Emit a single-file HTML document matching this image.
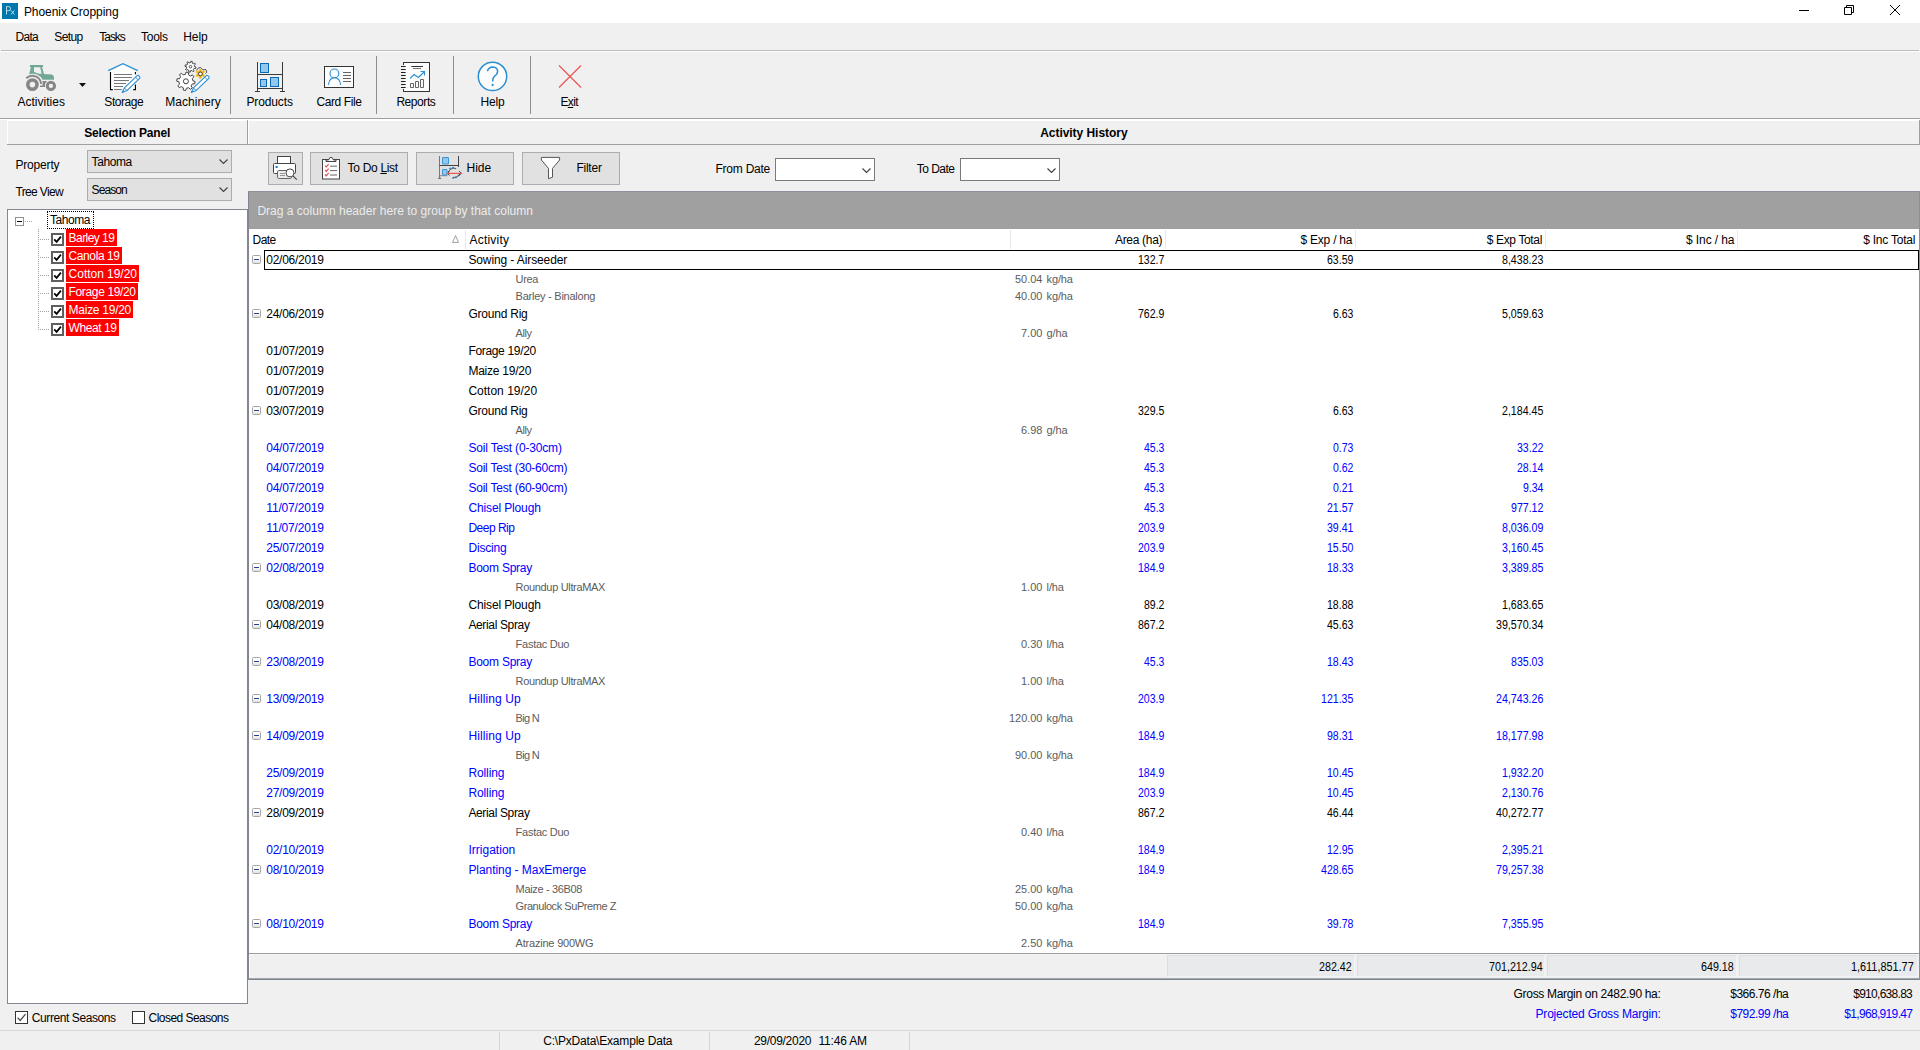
<!DOCTYPE html>
<html><head><meta charset="utf-8"><title>Phoenix Cropping</title>
<style>
html,body{margin:0;padding:0;}
body{width:1920px;height:1050px;overflow:hidden;background:#f0f0f0;position:relative;font-family:"Liberation Sans",sans-serif;}
div,svg{position:absolute;}
.t{white-space:pre;}
u{text-decoration:underline;text-underline-offset:1px;}
</style></head><body>
<div style="left:0px;top:0px;width:1920px;height:23px;background:#ffffff;"></div>
<div style="left:2px;top:3px;width:16px;height:16px;background:#0078ae;"></div>
<svg style="left:2px;top:3px;" width="16" height="16" viewBox="0 0 16 16"><path d="M4.5 11.5 V3.6 H6.6 Q8.6 3.7 8.6 5.7 Q8.6 7.7 6.6 7.8 H4.7 M9 7.4 L12.4 11.5 M12.4 7.4 L9 11.5" stroke="#cfe6f1" stroke-width="0.9" fill="none"/></svg>
<div class="t" style="left:23.90px;top:4.00px;font-size:12px;line-height:16px;color:#000;letter-spacing:-0.047px;">Phoenix Cropping</div>
<svg style="left:1790px;top:0px;" width="130" height="23" viewBox="0 0 130 23"><path d="M9 10.5H19" stroke="#000" stroke-width="1" fill="none"/><path d="M54.5 7.5H61.5V14.5H54.5Z M56.5 7.5V5.5H63.5V12.5H61.5" stroke="#000" stroke-width="1" fill="none"/><path d="M100 5L110 15M110 5L100 15" stroke="#000" stroke-width="1" fill="none"/></svg>
<div class="t" style="left:15.50px;top:28.60px;font-size:12px;line-height:16px;color:#000;letter-spacing:-0.683px;">Data</div>
<div class="t" style="left:54.30px;top:28.60px;font-size:12px;line-height:16px;color:#000;letter-spacing:-0.591px;">Setup</div>
<div class="t" style="left:99.30px;top:28.60px;font-size:12px;line-height:16px;color:#000;letter-spacing:-1.043px;">Tasks</div>
<div class="t" style="left:141.00px;top:28.60px;font-size:12px;line-height:16px;color:#000;letter-spacing:-0.253px;">Tools</div>
<div class="t" style="left:183.30px;top:28.60px;font-size:12px;line-height:16px;color:#000;letter-spacing:-0.126px;">Help</div>
<div style="left:1px;top:50px;width:1918px;height:1px;background:#bcbcbc;"></div>
<div style="left:0px;top:51px;width:1920px;height:1px;background:#ffffff;"></div>
<div style="left:230px;top:56px;width:1px;height:58px;background:#8e8e8e;"></div>
<div style="left:376px;top:56px;width:1px;height:58px;background:#8e8e8e;"></div>
<div style="left:453px;top:56px;width:1px;height:58px;background:#8e8e8e;"></div>
<div style="left:530px;top:56px;width:1px;height:58px;background:#8e8e8e;"></div>
<div style="left:0px;top:118px;width:1920px;height:1px;background:#a0a0a0;"></div>
<div style="left:0px;top:119px;width:1920px;height:1px;background:#ffffff;"></div>
<div class="t" style="left:17.40px;top:93.60px;font-size:12px;line-height:16px;color:#000;letter-spacing:0.028px;">Activities</div>
<div class="t" style="left:104.30px;top:93.60px;font-size:12px;line-height:16px;color:#000;letter-spacing:-0.422px;">Storage</div>
<div class="t" style="left:165.30px;top:93.60px;font-size:12px;line-height:16px;color:#000;letter-spacing:0.018px;">Machinery</div>
<div class="t" style="left:246.40px;top:93.60px;font-size:12px;line-height:16px;color:#000;letter-spacing:-0.108px;">Products</div>
<div class="t" style="left:316.40px;top:93.60px;font-size:12px;line-height:16px;color:#000;letter-spacing:-0.385px;">Card File</div>
<div class="t" style="left:396.40px;top:93.60px;font-size:12px;line-height:16px;color:#000;letter-spacing:-0.436px;">Reports</div>
<div class="t" style="left:480.40px;top:93.60px;font-size:12px;line-height:16px;color:#000;letter-spacing:-0.093px;">Help</div>
<div class="t" style="left:560.40px;top:93.60px;font-size:12px;line-height:16px;color:#000;letter-spacing:-0.601px;">E<u>x</u>it</div>
<svg style="left:20px;top:58px;" width="72" height="38" viewBox="0 0 72 38"><path d="M9.9 6.9 H23.1 V9 H22 L24 16 L31.5 16.4 Q34 16.8 34 19.5 V21.8 H22.6 A10.8 10.8 0 0 0 9.2 16.3 L10.9 9 H9.9Z M14 9.3 H20.2 L21.6 15.8 H19 L14 14Z" fill="#72a995" fill-rule="evenodd"/><path d="M6.3 20.3 A8.75 8.75 0 0 1 21.1 25.9" stroke="#868686" stroke-width="1.9" fill="none"/><path d="M22.6 23 H27 L25 26 V29 H20 V27.4 H22.6 Z" fill="#868686"/><circle cx="12.4" cy="26.6" r="4.6" stroke="#868686" stroke-width="3.6" fill="none"/><circle cx="30.9" cy="27.9" r="3.65" stroke="#868686" stroke-width="3" fill="none"/><path d="M59 25 H66 L62.5 29Z" fill="#111"/></svg>
<svg style="left:100px;top:58px;" width="48" height="38" viewBox="0 0 48 38"><path d="M10.5 13 L22.9 6.4 L35.4 13 V32 H10.5Z" fill="#fdfdfd"/><path d="M8.2 12.7 L22.9 5.7 L37.8 12.7" stroke="#2b8fd3" stroke-width="1.3" fill="none"/><path d="M10.5 14 V31.6 H12.8 M35.4 14 V16.2 M35.4 26.6 V31.6 H33.2" stroke="#000" stroke-width="1.1" fill="none"/><path d="M14 16.5H32 M14 19.5H32 M14 22.5H29 M14 25.5H26 M14 28.5H23 M14 31.5H21.8" stroke="#777" stroke-width="1" fill="none"/><path d="M22.2 34.6 L24.4 29.9 L37.2 17.6 Q38 17 38.7 17.7 L39.7 18.8 Q40.3 19.6 39.6 20.3 L26.9 32.6 Z" fill="#fff" stroke="#2b8fd3" stroke-width="1.1" stroke-linejoin="round"/><path d="M35.6 19.2 L38 21.8 M24.4 29.9 L26.9 32.6" stroke="#2b8fd3" stroke-width="1" fill="none"/><path d="M22.2 34.6 L23.3 32.2 L24.7 33.6Z" fill="#2b8fd3"/></svg>
<svg style="left:168px;top:56px;" width="48" height="40" viewBox="0 0 48 40"><path d="M26.50 10.62 L27.99 11.07 L27.70 12.50 L26.15 12.33 L25.38 13.47 L26.12 14.84 L24.90 15.65 L23.93 14.44 L22.58 14.70 L22.13 16.19 L20.70 15.90 L20.87 14.35 L19.73 13.58 L18.36 14.32 L17.55 13.10 L18.76 12.13 L18.50 10.78 L17.01 10.33 L17.30 8.90 L18.85 9.07 L19.62 7.93 L18.88 6.56 L20.10 5.75 L21.07 6.96 L22.42 6.70 L22.87 5.21 L24.30 5.50 L24.13 7.05 L25.27 7.82 L26.64 7.08 L27.45 8.30 L26.24 9.27Z" fill="#fff" stroke="#444" stroke-width="1" stroke-linejoin="round"/><circle cx="22.5" cy="10.7" r="1.3" fill="#fff" stroke="#444" stroke-width="0.9"/><path d="M35.32 18.40 L36.73 19.28 L35.90 20.72 L34.43 19.95 L33.21 20.66 L33.15 22.32 L31.48 22.33 L31.41 20.67 L30.19 19.97 L28.72 20.75 L27.88 19.31 L29.28 18.42 L29.28 17.00 L27.87 16.12 L28.70 14.68 L30.17 15.45 L31.39 14.74 L31.45 13.08 L33.12 13.07 L33.19 14.73 L34.41 15.43 L35.88 14.65 L36.72 16.09 L35.32 16.98Z" fill="#f0b414" stroke="#f0b414" stroke-width="0.6" stroke-linejoin="round"/><path d="M28.6 14.4 L29.8 12.4 L32.4 11.3 L34.6 13.6 L38 13.7 L38.9 16.2 L37.4 17.6" stroke="#444" stroke-width="0.9" fill="none" stroke-linejoin="round"/><circle cx="32.4" cy="17.9" r="1.9" fill="#fff" stroke="#444" stroke-width="1"/><path d="M24.88 24.81 L27.10 25.45 L26.73 27.87 L24.43 27.83 L23.18 29.89 L24.30 31.91 L22.33 33.37 L20.73 31.70 L18.39 32.28 L17.75 34.50 L15.33 34.13 L15.37 31.83 L13.31 30.58 L11.29 31.70 L9.83 29.73 L11.50 28.13 L10.92 25.79 L8.70 25.15 L9.07 22.73 L11.37 22.77 L12.62 20.71 L11.50 18.69 L13.47 17.23 L15.07 18.90 L17.41 18.32 L18.05 16.10 L20.47 16.47 L20.43 18.77 L22.49 20.02 L24.51 18.90 L25.97 20.87 L24.30 22.47Z" fill="#fff" stroke="#444" stroke-width="1" stroke-linejoin="round"/><circle cx="17.9" cy="25.3" r="2.5" fill="#fff" stroke="#444" stroke-width="1"/><path d="M23.3 36.6 L25.5 31.9 L38.4 19.6 Q39.2 19 39.9 19.7 L40.9 20.8 Q41.5 21.6 40.8 22.3 L28 34.6 Z" fill="#fff" stroke="#2b8fd3" stroke-width="1.1" stroke-linejoin="round"/><path d="M36.8 21.2 L39.2 23.8 M25.5 31.9 L28 34.6" stroke="#2b8fd3" stroke-width="1" fill="none"/><path d="M23.3 36.6 L24.4 34.2 L25.8 35.6Z" fill="#2b8fd3"/></svg>
<svg style="left:248px;top:56px;" width="44" height="40" viewBox="0 0 44 40"><path d="M9.5 6V35.5 M34.5 6V35.5 M7 35.5H12 M32 35.5H37 M9.5 18.5H34.5 M9.5 32.5H34.5" stroke="#3a3a3a" stroke-width="1" fill="none"/><rect x="12.5" y="7.5" width="8" height="9" fill="#92c8ee" stroke="#0a6ab8" stroke-width="1"/><rect x="12.5" y="23.5" width="6" height="7" fill="#92c8ee" stroke="#0a6ab8" stroke-width="1"/><rect x="22.5" y="21.5" width="8" height="9" fill="#92c8ee" stroke="#0a6ab8" stroke-width="1"/></svg>
<svg style="left:320px;top:60px;" width="40" height="32" viewBox="0 0 40 32"><rect x="4.5" y="6.5" width="29" height="21" fill="#fdfdfd" stroke="#333" stroke-width="1"/><circle cx="14.4" cy="13.4" r="4.4" fill="none" stroke="#2b8fd3" stroke-width="1.1"/><path d="M8.4 24.8 Q9.4 17.8 14.5 17.8 Q19.7 17.8 20.7 24.8" fill="none" stroke="#2b8fd3" stroke-width="1.1"/><path d="M23 12.5H31 M23 15.5H31 M23 18.5H31 M23 21.5H31" stroke="#666" stroke-width="1" fill="none"/></svg>
<svg style="left:396px;top:58px;" width="40" height="38" viewBox="0 0 40 38"><path d="M7.5 6.5 V4.5 H33.5 V33.5 H7.5 V31" fill="none" stroke="#333" stroke-width="1"/><path d="M8 5H33V33H8Z" fill="#fdfdfd"/><path d="M7.5 7 V4.5 H33.5 V33.5 H7.5 V31" fill="none" stroke="#333" stroke-width="1"/><path d="M5 8.5H9.7 M5 11.5H9.7 M5 14.5H9.7 M5 17.5H9.7 M5 20.5H9.7 M5 23.5H9.7 M5 26.5H9.7 M5 29.5H9.7" stroke="#222" stroke-width="1" fill="none"/><path d="M15.3 8.5H27" stroke="#333" stroke-width="1" fill="none"/><path d="M17 10.5H25" stroke="#777" stroke-width="1" fill="none"/><path d="M14 20.5 L18 16.5 L22.5 19.5 L28.5 13.5 M24.5 13.5 H28.5 V17.5" stroke="#2b8fd3" stroke-width="1.1" fill="none"/><path d="M14.5 25.5H17.5V29.5H14.5Z M19.5 23.5H22.5V29.5H19.5Z M24.5 21.5H27.5V29.5H24.5Z" stroke="#666" stroke-width="1" fill="none"/></svg>
<svg style="left:476px;top:60px;" width="34" height="34" viewBox="0 0 34 34"><circle cx="16.5" cy="16.4" r="14.2" fill="#fdfdfd" stroke="#2b8fd3" stroke-width="1.5"/><path d="M11.4 11.2 Q12.5 6.9 16.8 6.9 Q21.6 7.1 21.6 11.3 Q21.6 14.2 18.6 16.2 Q16.6 17.7 16.6 21.4" fill="none" stroke="#2b8fd3" stroke-width="1.5"/><circle cx="16.6" cy="25" r="1.15" fill="#2b8fd3"/></svg>
<svg style="left:554px;top:60px;" width="32" height="32" viewBox="0 0 32 32"><path d="M5 5.5 L27 27.5 M27 5.5 L5 27.5" stroke="#e85050" stroke-width="1.1" fill="none"/></svg>
<div style="left:7px;top:120px;width:241px;height:1px;background:#ffffff;"></div>
<div style="left:7px;top:120px;width:1px;height:25px;background:#ffffff;"></div>
<div style="left:7px;top:144px;width:241px;height:1px;background:#a0a0a0;"></div>
<div style="left:247px;top:120px;width:1px;height:25px;background:#a0a0a0;"></div>
<div class="t" style="left:84.20px;top:124.70px;font-size:12px;line-height:16px;color:#000;font-weight:bold;letter-spacing:-0.186px;">Selection Panel</div>
<div style="left:248px;top:120px;width:1672px;height:1px;background:#ffffff;"></div>
<div style="left:248px;top:120px;width:1px;height:25px;background:#ffffff;"></div>
<div style="left:248px;top:144px;width:1672px;height:1px;background:#a0a0a0;"></div>
<div style="left:1919px;top:120px;width:1px;height:25px;background:#a0a0a0;"></div>
<div class="t" style="left:1040.20px;top:124.70px;font-size:12px;line-height:16px;color:#000;font-weight:bold;letter-spacing:-0.042px;">Activity History</div>
<div class="t" style="left:15.40px;top:156.60px;font-size:12px;line-height:16px;color:#000;letter-spacing:-0.165px;">Property</div>
<div class="t" style="left:15.40px;top:183.60px;font-size:12px;line-height:16px;color:#000;letter-spacing:-0.623px;">Tree View</div>
<div style="left:87px;top:150px;width:145px;height:23px;background:#e1e1e1;border:1px solid #adadad;box-sizing:border-box;"></div>
<div class="t" style="left:91.60px;top:153.80px;font-size:12px;line-height:16px;color:#000;letter-spacing:-0.419px;">Tahoma</div>
<svg style="left:218.5px;top:159px;" width="9" height="5" viewBox="0 0 9 5"><path d="M0.5 0.5 L4.5 4.5 L8.5 0.5" stroke="#404040" stroke-width="1.1" fill="none"/></svg>
<div style="left:87px;top:178px;width:145px;height:23px;background:#e1e1e1;border:1px solid #adadad;box-sizing:border-box;"></div>
<div class="t" style="left:91.60px;top:181.60px;font-size:12px;line-height:16px;color:#000;letter-spacing:-0.940px;">Season</div>
<svg style="left:218.5px;top:187px;" width="9" height="5" viewBox="0 0 9 5"><path d="M0.5 0.5 L4.5 4.5 L8.5 0.5" stroke="#404040" stroke-width="1.1" fill="none"/></svg>
<div style="left:7px;top:209px;width:241px;height:795px;background:#ffffff;border:1px solid #828790;box-sizing:border-box;"></div>
<div style="left:15px;top:217px;width:9px;height:9px;background:#fff;border:1px solid #919191;box-sizing:border-box;"></div>
<div style="left:17px;top:221px;width:5px;height:1px;background:#000;"></div>
<div style="left:25px;top:221px;width:8px;height:1px;background:repeating-linear-gradient(90deg,#a0a0a0 0 1px,transparent 1px 2px);"></div>
<div style="left:38px;top:229px;width:1px;height:101px;background:repeating-linear-gradient(180deg,#a0a0a0 0 1px,transparent 1px 2px);"></div>
<div style="left:47px;top:211px;width:47px;height:18px;border:1px dotted #000;box-sizing:border-box;"></div>
<div class="t" style="left:50.00px;top:212.00px;font-size:12px;line-height:16px;color:#000;letter-spacing:-0.459px;">Tahoma</div>
<div style="left:38px;top:239px;width:12px;height:1px;background:repeating-linear-gradient(90deg,#a0a0a0 0 1px,transparent 1px 2px);"></div>
<div style="left:66px;top:229px;width:51px;height:17px;background:#ff0000;"></div>
<div class="t" style="left:68.60px;top:230.40px;font-size:12px;line-height:16px;color:#fff;letter-spacing:-0.549px;">Barley 19</div>
<div style="left:51px;top:233px;width:13px;height:13px;background:#fff;border:2px solid #5f5f5f;box-sizing:border-box;"></div>
<svg style="left:51px;top:233px;" width="13" height="13" viewBox="0 0 13 13"><path d="M3.2 6.4 L5.6 8.9 L9.9 3.6" stroke="#000" stroke-width="1.7" fill="none"/></svg>
<div style="left:38px;top:257px;width:12px;height:1px;background:repeating-linear-gradient(90deg,#a0a0a0 0 1px,transparent 1px 2px);"></div>
<div style="left:66px;top:247px;width:56px;height:17px;background:#ff0000;"></div>
<div class="t" style="left:68.60px;top:248.40px;font-size:12px;line-height:16px;color:#fff;letter-spacing:-0.413px;">Canola 19</div>
<div style="left:51px;top:251px;width:13px;height:13px;background:#fff;border:2px solid #5f5f5f;box-sizing:border-box;"></div>
<svg style="left:51px;top:251px;" width="13" height="13" viewBox="0 0 13 13"><path d="M3.2 6.4 L5.6 8.9 L9.9 3.6" stroke="#000" stroke-width="1.7" fill="none"/></svg>
<div style="left:38px;top:275px;width:12px;height:1px;background:repeating-linear-gradient(90deg,#a0a0a0 0 1px,transparent 1px 2px);"></div>
<div style="left:66px;top:265px;width:73px;height:17px;background:#ff0000;"></div>
<div class="t" style="left:68.60px;top:266.40px;font-size:12px;line-height:16px;color:#fff;letter-spacing:-0.029px;">Cotton 19/20</div>
<div style="left:51px;top:269px;width:13px;height:13px;background:#fff;border:2px solid #5f5f5f;box-sizing:border-box;"></div>
<svg style="left:51px;top:269px;" width="13" height="13" viewBox="0 0 13 13"><path d="M3.2 6.4 L5.6 8.9 L9.9 3.6" stroke="#000" stroke-width="1.7" fill="none"/></svg>
<div style="left:38px;top:293px;width:12px;height:1px;background:repeating-linear-gradient(90deg,#a0a0a0 0 1px,transparent 1px 2px);"></div>
<div style="left:66px;top:283px;width:72px;height:17px;background:#ff0000;"></div>
<div class="t" style="left:68.60px;top:284.40px;font-size:12px;line-height:16px;color:#fff;letter-spacing:-0.363px;">Forage 19/20</div>
<div style="left:51px;top:287px;width:13px;height:13px;background:#fff;border:2px solid #5f5f5f;box-sizing:border-box;"></div>
<svg style="left:51px;top:287px;" width="13" height="13" viewBox="0 0 13 13"><path d="M3.2 6.4 L5.6 8.9 L9.9 3.6" stroke="#000" stroke-width="1.7" fill="none"/></svg>
<div style="left:38px;top:311px;width:12px;height:1px;background:repeating-linear-gradient(90deg,#a0a0a0 0 1px,transparent 1px 2px);"></div>
<div style="left:66px;top:301px;width:67px;height:17px;background:#ff0000;"></div>
<div class="t" style="left:68.60px;top:302.40px;font-size:12px;line-height:16px;color:#fff;letter-spacing:-0.268px;">Maize 19/20</div>
<div style="left:51px;top:305px;width:13px;height:13px;background:#fff;border:2px solid #5f5f5f;box-sizing:border-box;"></div>
<svg style="left:51px;top:305px;" width="13" height="13" viewBox="0 0 13 13"><path d="M3.2 6.4 L5.6 8.9 L9.9 3.6" stroke="#000" stroke-width="1.7" fill="none"/></svg>
<div style="left:38px;top:329px;width:12px;height:1px;background:repeating-linear-gradient(90deg,#a0a0a0 0 1px,transparent 1px 2px);"></div>
<div style="left:66px;top:319px;width:53px;height:17px;background:#ff0000;"></div>
<div class="t" style="left:68.60px;top:320.40px;font-size:12px;line-height:16px;color:#fff;letter-spacing:-0.424px;">Wheat 19</div>
<div style="left:51px;top:323px;width:13px;height:13px;background:#fff;border:2px solid #5f5f5f;box-sizing:border-box;"></div>
<svg style="left:51px;top:323px;" width="13" height="13" viewBox="0 0 13 13"><path d="M3.2 6.4 L5.6 8.9 L9.9 3.6" stroke="#000" stroke-width="1.7" fill="none"/></svg>
<div style="left:15px;top:1011px;width:13px;height:13px;background:#fff;border:1px solid #333;box-sizing:border-box;"></div>
<svg style="left:15px;top:1011px;" width="13" height="13" viewBox="0 0 13 13"><path d="M2.6 6.6 L5.2 9.4 L10.5 3.1" stroke="#4a4a4a" stroke-width="1.3" fill="none"/></svg>
<div class="t" style="left:31.80px;top:1010.10px;font-size:12px;line-height:16px;color:#000;letter-spacing:-0.418px;">Current Seasons</div>
<div style="left:132px;top:1011px;width:13px;height:13px;background:#fff;border:1px solid #333;box-sizing:border-box;"></div>
<div class="t" style="left:148.50px;top:1010.10px;font-size:12px;line-height:16px;color:#000;letter-spacing:-0.530px;">Closed Seasons</div>
<div style="left:268px;top:152px;width:35px;height:33px;background:#e1e1e1;border:1px solid #adadad;box-sizing:border-box;"></div>
<div style="left:310px;top:152px;width:98px;height:33px;background:#e1e1e1;border:1px solid #adadad;box-sizing:border-box;"></div>
<div style="left:416px;top:152px;width:98px;height:33px;background:#e1e1e1;border:1px solid #adadad;box-sizing:border-box;"></div>
<div style="left:522px;top:152px;width:98px;height:33px;background:#e1e1e1;border:1px solid #adadad;box-sizing:border-box;"></div>
<svg style="left:268px;top:152px;" width="35" height="33" viewBox="0 0 35 33"><rect x="9.5" y="4.5" width="13" height="7.5" fill="#fff" stroke="#444" stroke-width="1"/><rect x="5.5" y="11.5" width="22" height="10" rx="1" fill="#fff" stroke="#444" stroke-width="1"/><rect x="7.5" y="14" width="2.2" height="2" fill="#1a86d8"/><rect x="9.5" y="18.5" width="14" height="8" rx="1.2" fill="#ececec" stroke="#666" stroke-width="1"/><path d="M12 21.5H17 M12 23.5H17" stroke="#999" stroke-width="1"/><circle cx="22" cy="20.9" r="4" fill="#fff" stroke="#444" stroke-width="1"/><path d="M25 24 L28.8 27.6" stroke="#444" stroke-width="1.1"/></svg>
<svg style="left:318px;top:152px;" width="26" height="33" viewBox="0 0 26 33"><rect x="4.5" y="7.5" width="17" height="19.5" fill="#fff" stroke="#444" stroke-width="1"/><path d="M8 9.5 V8 H10.5 L12 5.5 H14 L15.5 8 H18 V9.5Z" fill="#fff" stroke="#444" stroke-width="1" stroke-linejoin="round"/><path d="M7 13.6 L8.3 15 L10.6 12.2 M7 18 L8.3 19.4 L10.6 16.6 M7 22.4 L8.3 23.8 L10.6 21" stroke="#f04040" stroke-width="1.1" fill="none"/><path d="M12 14.2H19 M12 18.6H19 M12 23H19" stroke="#666" stroke-width="1"/></svg>
<div class="t" style="left:347.60px;top:160.00px;font-size:12px;line-height:16px;color:#000;letter-spacing:-0.318px;">To Do <u>L</u>ist</div>
<svg style="left:434px;top:152px;" width="32" height="33" viewBox="0 0 32 33"><path d="M5.5 4V27" stroke="#777" stroke-width="1" fill="none"/><path d="M24.5 4V15 M5.5 13.5H24.5" stroke="#444" stroke-width="1" fill="none"/><path d="M5.5 23.7H13.5" stroke="#888" stroke-width="1" fill="none"/><path d="M3.6 27 L5.5 24.5 L7.6 27Z" fill="#777"/><rect x="8.5" y="5.5" width="6" height="6.5" rx="0.3" fill="#92c8ee" stroke="#2b8fd3" stroke-width="0.9"/><rect x="8.5" y="17.5" width="4.5" height="5.5" rx="0.3" fill="#92c8ee" stroke="#2b8fd3" stroke-width="0.9"/><path d="M15 17 Q19 14 22 17 M18 26 Q22 27 25 23" stroke="#2b8fd3" stroke-width="1.2" stroke-dasharray="2 1.2" fill="none"/><path d="M14 20 Q18 15 21.5 16.5 M19 25.5 Q23 26 26 22" stroke="#444" stroke-width="0.9" fill="none"/><path d="M15.5 19.5 L13.5 21.3 L15.5 23.5 M25 19 L27.5 21.3 L25 23.5" stroke="#333" stroke-width="0.9" fill="none"/><path d="M12.5 21.4H28" stroke="#f05050" stroke-width="1.2" fill="none"/></svg>
<div class="t" style="left:466.60px;top:159.90px;font-size:12px;line-height:16px;color:#000;letter-spacing:-0.026px;">Hide</div>
<svg style="left:536px;top:152px;" width="30" height="33" viewBox="0 0 30 33"><path d="M5.4 5.4 H23.6 V8 L16.5 16.4 V25.2 L12.5 26.7 V16.4 L5.4 8 Z" fill="#fff" stroke="#555" stroke-width="1" stroke-linejoin="round"/></svg>
<div class="t" style="left:576.40px;top:159.90px;font-size:12px;line-height:16px;color:#000;letter-spacing:-0.233px;">Filter</div>
<div class="t" style="left:715.50px;top:160.70px;font-size:12px;line-height:16px;color:#000;letter-spacing:-0.235px;">From Date</div>
<div class="t" style="left:916.80px;top:160.70px;font-size:12px;line-height:16px;color:#000;letter-spacing:-0.526px;">To Date</div>
<div style="left:775px;top:158px;width:100px;height:23px;background:#fff;border:1px solid #7a7a7a;box-sizing:border-box;"></div>
<svg style="left:861.5px;top:167.5px;" width="9" height="5" viewBox="0 0 9 5"><path d="M0.5 0.5 L4.5 4.5 L8.5 0.5" stroke="#404040" stroke-width="1.1" fill="none"/></svg>
<div style="left:960px;top:158px;width:100px;height:23px;background:#fff;border:1px solid #7a7a7a;box-sizing:border-box;"></div>
<svg style="left:1046.5px;top:167.5px;" width="9" height="5" viewBox="0 0 9 5"><path d="M0.5 0.5 L4.5 4.5 L8.5 0.5" stroke="#404040" stroke-width="1.1" fill="none"/></svg>
<div style="left:248px;top:191px;width:1672px;height:38px;background:#a0a0a0;"></div>
<div style="left:248px;top:191px;width:1672px;height:1px;background:#8d919b;"></div>
<div class="t" style="left:257.40px;top:202.80px;font-size:12px;line-height:16px;color:#ececec;letter-spacing:0.016px;">Drag a column header here to group by that column</div>
<div style="left:249px;top:229px;width:1670px;height:724px;background:#ffffff;"></div>
<div style="left:248px;top:191px;width:1px;height:764px;background:#828790;"></div>
<div style="left:1919px;top:191px;width:1px;height:762px;background:#8b8f97;"></div>
<div style="left:465px;top:230px;width:1px;height:19px;background:#e9e9e9;"></div>
<div style="left:1010px;top:230px;width:1px;height:19px;background:#e9e9e9;"></div>
<div style="left:1165px;top:230px;width:1px;height:19px;background:#e9e9e9;"></div>
<div style="left:1355px;top:230px;width:1px;height:19px;background:#e9e9e9;"></div>
<div style="left:1545px;top:230px;width:1px;height:19px;background:#e9e9e9;"></div>
<div style="left:1737px;top:230px;width:1px;height:19px;background:#e9e9e9;"></div>
<div class="t" style="left:252.60px;top:231.70px;font-size:12px;line-height:16px;color:#000;letter-spacing:-0.583px;">Date</div>
<div class="t" style="left:469.50px;top:231.70px;font-size:12px;line-height:16px;color:#000;letter-spacing:0.214px;">Activity</div>
<svg style="left:451px;top:234px;" width="10" height="10" viewBox="0 0 10 10"><path d="M1.5 8.5 L4.5 1.5 L7.5 8.5Z" stroke="#9a9a9a" stroke-width="0.9" fill="#fafafa"/></svg>
<div class="t" style="left:1115.00px;top:231.70px;font-size:12px;line-height:16px;color:#000;letter-spacing:-0.315px;">Area (ha)</div>
<div class="t" style="left:1300.50px;top:231.70px;font-size:12px;line-height:16px;color:#000;letter-spacing:-0.227px;">$ Exp / ha</div>
<div class="t" style="left:1486.80px;top:231.70px;font-size:12px;line-height:16px;color:#000;letter-spacing:-0.365px;">$ Exp Total</div>
<div class="t" style="left:1686.10px;top:231.70px;font-size:12px;line-height:16px;color:#000;letter-spacing:-0.119px;">$ Inc / ha</div>
<div class="t" style="left:1863.20px;top:231.70px;font-size:12px;line-height:16px;color:#000;letter-spacing:-0.228px;">$ Inc Total</div>
<div style="left:252px;top:255px;width:9px;height:9px;border:1px solid #a6a6a6;box-sizing:border-box;border-radius:1.5px;background:linear-gradient(#fff 45%,#dedede);"></div>
<div style="left:254px;top:259px;width:5px;height:1px;background:#26408f;"></div>
<div class="t" style="left:266.30px;top:251.90px;font-size:12px;line-height:16px;color:#000;letter-spacing:-0.273px;">02/06/2019</div>
<div class="t" style="left:468.40px;top:251.90px;font-size:12px;line-height:16px;color:#000;letter-spacing:-0.107px;">Sowing - Airseeder</div>
<div class="t" style="left:1137.50px;top:251.90px;font-size:12px;line-height:16px;color:#000;transform:scaleX(0.8791);transform-origin:0 0;">132.7</div>
<div class="t" style="left:1327.20px;top:251.90px;font-size:12px;line-height:16px;color:#000;transform:scaleX(0.8791);transform-origin:0 0;">63.59</div>
<div class="t" style="left:1502.30px;top:251.90px;font-size:12px;line-height:16px;color:#000;transform:scaleX(0.8863);transform-origin:0 0;">8,438.23</div>
<div class="t" style="left:515.60px;top:272.30px;font-size:11px;line-height:15px;color:#5c5c5c;letter-spacing:-0.383px;">Urea</div>
<div class="t" style="left:1015.00px;top:272.30px;font-size:11px;line-height:15px;color:#5c5c5c;transform:scaleX(0.9954);transform-origin:0 0;">50.04</div>
<div class="t" style="left:1046.60px;top:272.30px;font-size:11px;line-height:15px;color:#5c5c5c;letter-spacing:-0.150px;">kg/ha</div>
<div class="t" style="left:515.60px;top:289.30px;font-size:11px;line-height:15px;color:#5c5c5c;letter-spacing:-0.248px;">Barley - Binalong</div>
<div class="t" style="left:1015.00px;top:289.30px;font-size:11px;line-height:15px;color:#5c5c5c;transform:scaleX(0.9954);transform-origin:0 0;">40.00</div>
<div class="t" style="left:1046.60px;top:289.30px;font-size:11px;line-height:15px;color:#5c5c5c;letter-spacing:-0.150px;">kg/ha</div>
<div style="left:252px;top:309px;width:9px;height:9px;border:1px solid #a6a6a6;box-sizing:border-box;border-radius:1.5px;background:linear-gradient(#fff 45%,#dedede);"></div>
<div style="left:254px;top:313px;width:5px;height:1px;background:#26408f;"></div>
<div class="t" style="left:266.30px;top:305.90px;font-size:12px;line-height:16px;color:#000;letter-spacing:-0.273px;">24/06/2019</div>
<div class="t" style="left:468.40px;top:305.90px;font-size:12px;line-height:16px;color:#000;letter-spacing:-0.219px;">Ground Rig</div>
<div class="t" style="left:1137.50px;top:305.90px;font-size:12px;line-height:16px;color:#000;transform:scaleX(0.8791);transform-origin:0 0;">762.9</div>
<div class="t" style="left:1333.20px;top:305.90px;font-size:12px;line-height:16px;color:#000;transform:scaleX(0.8734);transform-origin:0 0;">6.63</div>
<div class="t" style="left:1502.30px;top:305.90px;font-size:12px;line-height:16px;color:#000;transform:scaleX(0.8863);transform-origin:0 0;">5,059.63</div>
<div class="t" style="left:515.60px;top:326.30px;font-size:11px;line-height:15px;color:#5c5c5c;letter-spacing:-0.475px;">Ally</div>
<div class="t" style="left:1021.00px;top:326.30px;font-size:11px;line-height:15px;color:#5c5c5c;transform:scaleX(0.9995);transform-origin:0 0;">7.00</div>
<div class="t" style="left:1046.60px;top:326.30px;font-size:11px;line-height:15px;color:#5c5c5c;letter-spacing:-0.150px;">g/ha</div>
<div class="t" style="left:266.30px;top:342.90px;font-size:12px;line-height:16px;color:#000;letter-spacing:-0.273px;">01/07/2019</div>
<div class="t" style="left:468.40px;top:342.90px;font-size:12px;line-height:16px;color:#000;letter-spacing:-0.326px;">Forage 19/20</div>
<div class="t" style="left:266.30px;top:362.90px;font-size:12px;line-height:16px;color:#000;letter-spacing:-0.273px;">01/07/2019</div>
<div class="t" style="left:468.40px;top:362.90px;font-size:12px;line-height:16px;color:#000;letter-spacing:-0.228px;">Maize 19/20</div>
<div class="t" style="left:266.30px;top:382.90px;font-size:12px;line-height:16px;color:#000;letter-spacing:-0.273px;">01/07/2019</div>
<div class="t" style="left:468.40px;top:382.90px;font-size:12px;line-height:16px;color:#000;letter-spacing:0.007px;">Cotton 19/20</div>
<div style="left:252px;top:406px;width:9px;height:9px;border:1px solid #a6a6a6;box-sizing:border-box;border-radius:1.5px;background:linear-gradient(#fff 45%,#dedede);"></div>
<div style="left:254px;top:410px;width:5px;height:1px;background:#26408f;"></div>
<div class="t" style="left:266.30px;top:402.90px;font-size:12px;line-height:16px;color:#000;letter-spacing:-0.273px;">03/07/2019</div>
<div class="t" style="left:468.40px;top:402.90px;font-size:12px;line-height:16px;color:#000;letter-spacing:-0.219px;">Ground Rig</div>
<div class="t" style="left:1137.50px;top:402.90px;font-size:12px;line-height:16px;color:#000;transform:scaleX(0.8791);transform-origin:0 0;">329.5</div>
<div class="t" style="left:1333.20px;top:402.90px;font-size:12px;line-height:16px;color:#000;transform:scaleX(0.8734);transform-origin:0 0;">6.63</div>
<div class="t" style="left:1502.30px;top:402.90px;font-size:12px;line-height:16px;color:#000;transform:scaleX(0.8863);transform-origin:0 0;">2,184.45</div>
<div class="t" style="left:515.60px;top:423.30px;font-size:11px;line-height:15px;color:#5c5c5c;letter-spacing:-0.475px;">Ally</div>
<div class="t" style="left:1021.00px;top:423.30px;font-size:11px;line-height:15px;color:#5c5c5c;transform:scaleX(0.9995);transform-origin:0 0;">6.98</div>
<div class="t" style="left:1046.60px;top:423.30px;font-size:11px;line-height:15px;color:#5c5c5c;letter-spacing:-0.150px;">g/ha</div>
<div class="t" style="left:266.30px;top:439.90px;font-size:12px;line-height:16px;color:#0000ff;letter-spacing:-0.273px;">04/07/2019</div>
<div class="t" style="left:468.40px;top:439.90px;font-size:12px;line-height:16px;color:#0000ff;letter-spacing:-0.175px;">Soil Test (0-30cm)</div>
<div class="t" style="left:1143.50px;top:439.90px;font-size:12px;line-height:16px;color:#0000ff;transform:scaleX(0.8734);transform-origin:0 0;">45.3</div>
<div class="t" style="left:1333.20px;top:439.90px;font-size:12px;line-height:16px;color:#0000ff;transform:scaleX(0.8734);transform-origin:0 0;">0.73</div>
<div class="t" style="left:1517.30px;top:439.90px;font-size:12px;line-height:16px;color:#0000ff;transform:scaleX(0.8791);transform-origin:0 0;">33.22</div>
<div class="t" style="left:266.30px;top:459.90px;font-size:12px;line-height:16px;color:#0000ff;letter-spacing:-0.273px;">04/07/2019</div>
<div class="t" style="left:468.40px;top:459.90px;font-size:12px;line-height:16px;color:#0000ff;letter-spacing:-0.220px;">Soil Test (30-60cm)</div>
<div class="t" style="left:1143.50px;top:459.90px;font-size:12px;line-height:16px;color:#0000ff;transform:scaleX(0.8734);transform-origin:0 0;">45.3</div>
<div class="t" style="left:1333.20px;top:459.90px;font-size:12px;line-height:16px;color:#0000ff;transform:scaleX(0.8734);transform-origin:0 0;">0.62</div>
<div class="t" style="left:1517.30px;top:459.90px;font-size:12px;line-height:16px;color:#0000ff;transform:scaleX(0.8791);transform-origin:0 0;">28.14</div>
<div class="t" style="left:266.30px;top:479.90px;font-size:12px;line-height:16px;color:#0000ff;letter-spacing:-0.273px;">04/07/2019</div>
<div class="t" style="left:468.40px;top:479.90px;font-size:12px;line-height:16px;color:#0000ff;letter-spacing:-0.220px;">Soil Test (60-90cm)</div>
<div class="t" style="left:1143.50px;top:479.90px;font-size:12px;line-height:16px;color:#0000ff;transform:scaleX(0.8734);transform-origin:0 0;">45.3</div>
<div class="t" style="left:1333.20px;top:479.90px;font-size:12px;line-height:16px;color:#0000ff;transform:scaleX(0.8734);transform-origin:0 0;">0.21</div>
<div class="t" style="left:1523.30px;top:479.90px;font-size:12px;line-height:16px;color:#0000ff;transform:scaleX(0.8734);transform-origin:0 0;">9.34</div>
<div class="t" style="left:266.30px;top:499.90px;font-size:12px;line-height:16px;color:#0000ff;letter-spacing:-0.174px;">11/07/2019</div>
<div class="t" style="left:468.40px;top:499.90px;font-size:12px;line-height:16px;color:#0000ff;letter-spacing:-0.129px;">Chisel Plough</div>
<div class="t" style="left:1143.50px;top:499.90px;font-size:12px;line-height:16px;color:#0000ff;transform:scaleX(0.8734);transform-origin:0 0;">45.3</div>
<div class="t" style="left:1327.20px;top:499.90px;font-size:12px;line-height:16px;color:#0000ff;transform:scaleX(0.8791);transform-origin:0 0;">21.57</div>
<div class="t" style="left:1511.30px;top:499.90px;font-size:12px;line-height:16px;color:#0000ff;transform:scaleX(0.8828);transform-origin:0 0;">977.12</div>
<div class="t" style="left:266.30px;top:519.90px;font-size:12px;line-height:16px;color:#0000ff;letter-spacing:-0.174px;">11/07/2019</div>
<div class="t" style="left:468.40px;top:519.90px;font-size:12px;line-height:16px;color:#0000ff;letter-spacing:-0.504px;">Deep Rip</div>
<div class="t" style="left:1137.50px;top:519.90px;font-size:12px;line-height:16px;color:#0000ff;transform:scaleX(0.8791);transform-origin:0 0;">203.9</div>
<div class="t" style="left:1327.20px;top:519.90px;font-size:12px;line-height:16px;color:#0000ff;transform:scaleX(0.8791);transform-origin:0 0;">39.41</div>
<div class="t" style="left:1502.30px;top:519.90px;font-size:12px;line-height:16px;color:#0000ff;transform:scaleX(0.8863);transform-origin:0 0;">8,036.09</div>
<div class="t" style="left:266.30px;top:539.90px;font-size:12px;line-height:16px;color:#0000ff;letter-spacing:-0.273px;">25/07/2019</div>
<div class="t" style="left:468.40px;top:539.90px;font-size:12px;line-height:16px;color:#0000ff;letter-spacing:-0.158px;">Discing</div>
<div class="t" style="left:1137.50px;top:539.90px;font-size:12px;line-height:16px;color:#0000ff;transform:scaleX(0.8791);transform-origin:0 0;">203.9</div>
<div class="t" style="left:1327.20px;top:539.90px;font-size:12px;line-height:16px;color:#0000ff;transform:scaleX(0.8791);transform-origin:0 0;">15.50</div>
<div class="t" style="left:1502.30px;top:539.90px;font-size:12px;line-height:16px;color:#0000ff;transform:scaleX(0.8863);transform-origin:0 0;">3,160.45</div>
<div style="left:252px;top:563px;width:9px;height:9px;border:1px solid #a6a6a6;box-sizing:border-box;border-radius:1.5px;background:linear-gradient(#fff 45%,#dedede);"></div>
<div style="left:254px;top:567px;width:5px;height:1px;background:#26408f;"></div>
<div class="t" style="left:266.30px;top:559.90px;font-size:12px;line-height:16px;color:#0000ff;letter-spacing:-0.273px;">02/08/2019</div>
<div class="t" style="left:468.40px;top:559.90px;font-size:12px;line-height:16px;color:#0000ff;letter-spacing:-0.237px;">Boom Spray</div>
<div class="t" style="left:1137.50px;top:559.90px;font-size:12px;line-height:16px;color:#0000ff;transform:scaleX(0.8791);transform-origin:0 0;">184.9</div>
<div class="t" style="left:1327.20px;top:559.90px;font-size:12px;line-height:16px;color:#0000ff;transform:scaleX(0.8791);transform-origin:0 0;">18.33</div>
<div class="t" style="left:1502.30px;top:559.90px;font-size:12px;line-height:16px;color:#0000ff;transform:scaleX(0.8863);transform-origin:0 0;">3,389.85</div>
<div class="t" style="left:515.60px;top:580.30px;font-size:11px;line-height:15px;color:#5c5c5c;letter-spacing:-0.331px;">Roundup UltraMAX</div>
<div class="t" style="left:1021.00px;top:580.30px;font-size:11px;line-height:15px;color:#5c5c5c;transform:scaleX(0.9995);transform-origin:0 0;">1.00</div>
<div class="t" style="left:1046.60px;top:580.30px;font-size:11px;line-height:15px;color:#5c5c5c;letter-spacing:-0.150px;">l/ha</div>
<div class="t" style="left:266.30px;top:596.90px;font-size:12px;line-height:16px;color:#000;letter-spacing:-0.273px;">03/08/2019</div>
<div class="t" style="left:468.40px;top:596.90px;font-size:12px;line-height:16px;color:#000;letter-spacing:-0.129px;">Chisel Plough</div>
<div class="t" style="left:1143.50px;top:596.90px;font-size:12px;line-height:16px;color:#000;transform:scaleX(0.8734);transform-origin:0 0;">89.2</div>
<div class="t" style="left:1327.20px;top:596.90px;font-size:12px;line-height:16px;color:#000;transform:scaleX(0.8791);transform-origin:0 0;">18.88</div>
<div class="t" style="left:1502.30px;top:596.90px;font-size:12px;line-height:16px;color:#000;transform:scaleX(0.8863);transform-origin:0 0;">1,683.65</div>
<div style="left:252px;top:620px;width:9px;height:9px;border:1px solid #a6a6a6;box-sizing:border-box;border-radius:1.5px;background:linear-gradient(#fff 45%,#dedede);"></div>
<div style="left:254px;top:624px;width:5px;height:1px;background:#26408f;"></div>
<div class="t" style="left:266.30px;top:616.90px;font-size:12px;line-height:16px;color:#000;letter-spacing:-0.273px;">04/08/2019</div>
<div class="t" style="left:468.40px;top:616.90px;font-size:12px;line-height:16px;color:#000;letter-spacing:-0.351px;">Aerial Spray</div>
<div class="t" style="left:1137.50px;top:616.90px;font-size:12px;line-height:16px;color:#000;transform:scaleX(0.8791);transform-origin:0 0;">867.2</div>
<div class="t" style="left:1327.20px;top:616.90px;font-size:12px;line-height:16px;color:#000;transform:scaleX(0.8791);transform-origin:0 0;">45.63</div>
<div class="t" style="left:1496.30px;top:616.90px;font-size:12px;line-height:16px;color:#000;transform:scaleX(0.8878);transform-origin:0 0;">39,570.34</div>
<div class="t" style="left:515.60px;top:637.30px;font-size:11px;line-height:15px;color:#5c5c5c;letter-spacing:-0.261px;">Fastac Duo</div>
<div class="t" style="left:1021.00px;top:637.30px;font-size:11px;line-height:15px;color:#5c5c5c;transform:scaleX(0.9995);transform-origin:0 0;">0.30</div>
<div class="t" style="left:1046.60px;top:637.30px;font-size:11px;line-height:15px;color:#5c5c5c;letter-spacing:-0.150px;">l/ha</div>
<div style="left:252px;top:657px;width:9px;height:9px;border:1px solid #a6a6a6;box-sizing:border-box;border-radius:1.5px;background:linear-gradient(#fff 45%,#dedede);"></div>
<div style="left:254px;top:661px;width:5px;height:1px;background:#26408f;"></div>
<div class="t" style="left:266.30px;top:653.90px;font-size:12px;line-height:16px;color:#0000ff;letter-spacing:-0.273px;">23/08/2019</div>
<div class="t" style="left:468.40px;top:653.90px;font-size:12px;line-height:16px;color:#0000ff;letter-spacing:-0.237px;">Boom Spray</div>
<div class="t" style="left:1143.50px;top:653.90px;font-size:12px;line-height:16px;color:#0000ff;transform:scaleX(0.8734);transform-origin:0 0;">45.3</div>
<div class="t" style="left:1327.20px;top:653.90px;font-size:12px;line-height:16px;color:#0000ff;transform:scaleX(0.8791);transform-origin:0 0;">18.43</div>
<div class="t" style="left:1511.30px;top:653.90px;font-size:12px;line-height:16px;color:#0000ff;transform:scaleX(0.8828);transform-origin:0 0;">835.03</div>
<div class="t" style="left:515.60px;top:674.30px;font-size:11px;line-height:15px;color:#5c5c5c;letter-spacing:-0.331px;">Roundup UltraMAX</div>
<div class="t" style="left:1021.00px;top:674.30px;font-size:11px;line-height:15px;color:#5c5c5c;transform:scaleX(0.9995);transform-origin:0 0;">1.00</div>
<div class="t" style="left:1046.60px;top:674.30px;font-size:11px;line-height:15px;color:#5c5c5c;letter-spacing:-0.150px;">l/ha</div>
<div style="left:252px;top:694px;width:9px;height:9px;border:1px solid #a6a6a6;box-sizing:border-box;border-radius:1.5px;background:linear-gradient(#fff 45%,#dedede);"></div>
<div style="left:254px;top:698px;width:5px;height:1px;background:#26408f;"></div>
<div class="t" style="left:266.30px;top:690.90px;font-size:12px;line-height:16px;color:#0000ff;letter-spacing:-0.273px;">13/09/2019</div>
<div class="t" style="left:468.40px;top:690.90px;font-size:12px;line-height:16px;color:#0000ff;letter-spacing:0.094px;">Hilling Up</div>
<div class="t" style="left:1137.50px;top:690.90px;font-size:12px;line-height:16px;color:#0000ff;transform:scaleX(0.8791);transform-origin:0 0;">203.9</div>
<div class="t" style="left:1321.20px;top:690.90px;font-size:12px;line-height:16px;color:#0000ff;transform:scaleX(0.8828);transform-origin:0 0;">121.35</div>
<div class="t" style="left:1496.30px;top:690.90px;font-size:12px;line-height:16px;color:#0000ff;transform:scaleX(0.8878);transform-origin:0 0;">24,743.26</div>
<div class="t" style="left:515.60px;top:711.30px;font-size:11px;line-height:15px;color:#5c5c5c;letter-spacing:-0.700px;">Big N</div>
<div class="t" style="left:1009.00px;top:711.30px;font-size:11px;line-height:15px;color:#5c5c5c;transform:scaleX(0.9928);transform-origin:0 0;">120.00</div>
<div class="t" style="left:1046.60px;top:711.30px;font-size:11px;line-height:15px;color:#5c5c5c;letter-spacing:-0.150px;">kg/ha</div>
<div style="left:252px;top:731px;width:9px;height:9px;border:1px solid #a6a6a6;box-sizing:border-box;border-radius:1.5px;background:linear-gradient(#fff 45%,#dedede);"></div>
<div style="left:254px;top:735px;width:5px;height:1px;background:#26408f;"></div>
<div class="t" style="left:266.30px;top:727.90px;font-size:12px;line-height:16px;color:#0000ff;letter-spacing:-0.273px;">14/09/2019</div>
<div class="t" style="left:468.40px;top:727.90px;font-size:12px;line-height:16px;color:#0000ff;letter-spacing:0.094px;">Hilling Up</div>
<div class="t" style="left:1137.50px;top:727.90px;font-size:12px;line-height:16px;color:#0000ff;transform:scaleX(0.8791);transform-origin:0 0;">184.9</div>
<div class="t" style="left:1327.20px;top:727.90px;font-size:12px;line-height:16px;color:#0000ff;transform:scaleX(0.8791);transform-origin:0 0;">98.31</div>
<div class="t" style="left:1496.30px;top:727.90px;font-size:12px;line-height:16px;color:#0000ff;transform:scaleX(0.8878);transform-origin:0 0;">18,177.98</div>
<div class="t" style="left:515.60px;top:748.30px;font-size:11px;line-height:15px;color:#5c5c5c;letter-spacing:-0.700px;">Big N</div>
<div class="t" style="left:1015.00px;top:748.30px;font-size:11px;line-height:15px;color:#5c5c5c;transform:scaleX(0.9954);transform-origin:0 0;">90.00</div>
<div class="t" style="left:1046.60px;top:748.30px;font-size:11px;line-height:15px;color:#5c5c5c;letter-spacing:-0.150px;">kg/ha</div>
<div class="t" style="left:266.30px;top:764.90px;font-size:12px;line-height:16px;color:#0000ff;letter-spacing:-0.273px;">25/09/2019</div>
<div class="t" style="left:468.40px;top:764.90px;font-size:12px;line-height:16px;color:#0000ff;letter-spacing:-0.097px;">Rolling</div>
<div class="t" style="left:1137.50px;top:764.90px;font-size:12px;line-height:16px;color:#0000ff;transform:scaleX(0.8791);transform-origin:0 0;">184.9</div>
<div class="t" style="left:1327.20px;top:764.90px;font-size:12px;line-height:16px;color:#0000ff;transform:scaleX(0.8791);transform-origin:0 0;">10.45</div>
<div class="t" style="left:1502.30px;top:764.90px;font-size:12px;line-height:16px;color:#0000ff;transform:scaleX(0.8863);transform-origin:0 0;">1,932.20</div>
<div class="t" style="left:266.30px;top:784.90px;font-size:12px;line-height:16px;color:#0000ff;letter-spacing:-0.273px;">27/09/2019</div>
<div class="t" style="left:468.40px;top:784.90px;font-size:12px;line-height:16px;color:#0000ff;letter-spacing:-0.097px;">Rolling</div>
<div class="t" style="left:1137.50px;top:784.90px;font-size:12px;line-height:16px;color:#0000ff;transform:scaleX(0.8791);transform-origin:0 0;">203.9</div>
<div class="t" style="left:1327.20px;top:784.90px;font-size:12px;line-height:16px;color:#0000ff;transform:scaleX(0.8791);transform-origin:0 0;">10.45</div>
<div class="t" style="left:1502.30px;top:784.90px;font-size:12px;line-height:16px;color:#0000ff;transform:scaleX(0.8863);transform-origin:0 0;">2,130.76</div>
<div style="left:252px;top:808px;width:9px;height:9px;border:1px solid #a6a6a6;box-sizing:border-box;border-radius:1.5px;background:linear-gradient(#fff 45%,#dedede);"></div>
<div style="left:254px;top:812px;width:5px;height:1px;background:#26408f;"></div>
<div class="t" style="left:266.30px;top:804.90px;font-size:12px;line-height:16px;color:#000;letter-spacing:-0.273px;">28/09/2019</div>
<div class="t" style="left:468.40px;top:804.90px;font-size:12px;line-height:16px;color:#000;letter-spacing:-0.351px;">Aerial Spray</div>
<div class="t" style="left:1137.50px;top:804.90px;font-size:12px;line-height:16px;color:#000;transform:scaleX(0.8791);transform-origin:0 0;">867.2</div>
<div class="t" style="left:1327.20px;top:804.90px;font-size:12px;line-height:16px;color:#000;transform:scaleX(0.8791);transform-origin:0 0;">46.44</div>
<div class="t" style="left:1496.30px;top:804.90px;font-size:12px;line-height:16px;color:#000;transform:scaleX(0.8878);transform-origin:0 0;">40,272.77</div>
<div class="t" style="left:515.60px;top:825.30px;font-size:11px;line-height:15px;color:#5c5c5c;letter-spacing:-0.261px;">Fastac Duo</div>
<div class="t" style="left:1021.00px;top:825.30px;font-size:11px;line-height:15px;color:#5c5c5c;transform:scaleX(0.9995);transform-origin:0 0;">0.40</div>
<div class="t" style="left:1046.60px;top:825.30px;font-size:11px;line-height:15px;color:#5c5c5c;letter-spacing:-0.150px;">l/ha</div>
<div class="t" style="left:266.30px;top:841.90px;font-size:12px;line-height:16px;color:#0000ff;letter-spacing:-0.273px;">02/10/2019</div>
<div class="t" style="left:468.40px;top:841.90px;font-size:12px;line-height:16px;color:#0000ff;letter-spacing:0.024px;">Irrigation</div>
<div class="t" style="left:1137.50px;top:841.90px;font-size:12px;line-height:16px;color:#0000ff;transform:scaleX(0.8791);transform-origin:0 0;">184.9</div>
<div class="t" style="left:1327.20px;top:841.90px;font-size:12px;line-height:16px;color:#0000ff;transform:scaleX(0.8791);transform-origin:0 0;">12.95</div>
<div class="t" style="left:1502.30px;top:841.90px;font-size:12px;line-height:16px;color:#0000ff;transform:scaleX(0.8863);transform-origin:0 0;">2,395.21</div>
<div style="left:252px;top:865px;width:9px;height:9px;border:1px solid #a6a6a6;box-sizing:border-box;border-radius:1.5px;background:linear-gradient(#fff 45%,#dedede);"></div>
<div style="left:254px;top:869px;width:5px;height:1px;background:#26408f;"></div>
<div class="t" style="left:266.30px;top:861.90px;font-size:12px;line-height:16px;color:#0000ff;letter-spacing:-0.273px;">08/10/2019</div>
<div class="t" style="left:468.40px;top:861.90px;font-size:12px;line-height:16px;color:#0000ff;letter-spacing:-0.053px;">Planting - MaxEmerge</div>
<div class="t" style="left:1137.50px;top:861.90px;font-size:12px;line-height:16px;color:#0000ff;transform:scaleX(0.8791);transform-origin:0 0;">184.9</div>
<div class="t" style="left:1321.20px;top:861.90px;font-size:12px;line-height:16px;color:#0000ff;transform:scaleX(0.8828);transform-origin:0 0;">428.65</div>
<div class="t" style="left:1496.30px;top:861.90px;font-size:12px;line-height:16px;color:#0000ff;transform:scaleX(0.8878);transform-origin:0 0;">79,257.38</div>
<div class="t" style="left:515.60px;top:882.30px;font-size:11px;line-height:15px;color:#5c5c5c;letter-spacing:-0.352px;">Maize - 36B08</div>
<div class="t" style="left:1015.00px;top:882.30px;font-size:11px;line-height:15px;color:#5c5c5c;transform:scaleX(0.9954);transform-origin:0 0;">25.00</div>
<div class="t" style="left:1046.60px;top:882.30px;font-size:11px;line-height:15px;color:#5c5c5c;letter-spacing:-0.150px;">kg/ha</div>
<div class="t" style="left:515.60px;top:899.30px;font-size:11px;line-height:15px;color:#5c5c5c;letter-spacing:-0.445px;">Granulock SuPreme Z</div>
<div class="t" style="left:1015.00px;top:899.30px;font-size:11px;line-height:15px;color:#5c5c5c;transform:scaleX(0.9954);transform-origin:0 0;">50.00</div>
<div class="t" style="left:1046.60px;top:899.30px;font-size:11px;line-height:15px;color:#5c5c5c;letter-spacing:-0.150px;">kg/ha</div>
<div style="left:252px;top:919px;width:9px;height:9px;border:1px solid #a6a6a6;box-sizing:border-box;border-radius:1.5px;background:linear-gradient(#fff 45%,#dedede);"></div>
<div style="left:254px;top:923px;width:5px;height:1px;background:#26408f;"></div>
<div class="t" style="left:266.30px;top:915.90px;font-size:12px;line-height:16px;color:#0000ff;letter-spacing:-0.273px;">08/10/2019</div>
<div class="t" style="left:468.40px;top:915.90px;font-size:12px;line-height:16px;color:#0000ff;letter-spacing:-0.237px;">Boom Spray</div>
<div class="t" style="left:1137.50px;top:915.90px;font-size:12px;line-height:16px;color:#0000ff;transform:scaleX(0.8791);transform-origin:0 0;">184.9</div>
<div class="t" style="left:1327.20px;top:915.90px;font-size:12px;line-height:16px;color:#0000ff;transform:scaleX(0.8791);transform-origin:0 0;">39.78</div>
<div class="t" style="left:1502.30px;top:915.90px;font-size:12px;line-height:16px;color:#0000ff;transform:scaleX(0.8863);transform-origin:0 0;">7,355.95</div>
<div class="t" style="left:515.60px;top:936.30px;font-size:11px;line-height:15px;color:#5c5c5c;letter-spacing:-0.208px;">Atrazine 900WG</div>
<div class="t" style="left:1021.00px;top:936.30px;font-size:11px;line-height:15px;color:#5c5c5c;transform:scaleX(0.9995);transform-origin:0 0;">2.50</div>
<div class="t" style="left:1046.60px;top:936.30px;font-size:11px;line-height:15px;color:#5c5c5c;letter-spacing:-0.150px;">kg/ha</div>
<div style="left:264px;top:250px;width:1655px;height:20px;border:1px solid #000;box-sizing:border-box;"></div>
<div style="left:248px;top:953px;width:1672px;height:1px;background:#9b9b9b;"></div>
<div style="left:248px;top:954px;width:1672px;height:1px;background:#f6f6f6;"></div>
<div style="left:248px;top:955px;width:1672px;height:23px;background:#f0f0f0;"></div>
<div style="left:248px;top:978px;width:1672px;height:1px;background:#a3a7ae;"></div>
<div style="left:248px;top:979px;width:1672px;height:1px;background:#7d8492;"></div>
<div style="left:248px;top:953px;width:1px;height:27px;background:#828790;"></div>
<div style="left:249px;top:955px;width:1px;height:23px;background:#fafafa;"></div>
<div style="left:1919px;top:953px;width:1px;height:27px;background:#8b8f97;"></div>
<div style="left:1167px;top:955px;width:188px;height:22px;background:#e8eaeb;border:1px solid #dcdfe1;border-right-color:#f2f3f4;border-bottom-color:#f2f3f4;box-sizing:border-box;"></div>
<div class="t" style="left:1319.00px;top:958.80px;font-size:12px;line-height:16px;color:#000;transform:scaleX(0.8910);transform-origin:0 0;">282.42</div>
<div style="left:1357px;top:955px;width:188px;height:22px;background:#e8eaeb;border:1px solid #dcdfe1;border-right-color:#f2f3f4;border-bottom-color:#f2f3f4;box-sizing:border-box;"></div>
<div class="t" style="left:1488.50px;top:958.80px;font-size:12px;line-height:16px;color:#000;transform:scaleX(0.8941);transform-origin:0 0;">701,212.94</div>
<div style="left:1547px;top:955px;width:190px;height:22px;background:#e8eaeb;border:1px solid #dcdfe1;border-right-color:#f2f3f4;border-bottom-color:#f2f3f4;box-sizing:border-box;"></div>
<div class="t" style="left:1701.30px;top:958.80px;font-size:12px;line-height:16px;color:#000;transform:scaleX(0.8910);transform-origin:0 0;">649.18</div>
<div style="left:1739px;top:955px;width:179px;height:22px;background:#e8eaeb;border:1px solid #dcdfe1;border-right-color:#f2f3f4;border-bottom-color:#f2f3f4;box-sizing:border-box;"></div>
<div class="t" style="left:1851.30px;top:958.80px;font-size:12px;line-height:16px;color:#000;transform:scaleX(0.9064);transform-origin:0 0;">1,611,851.77</div>
<div class="t" style="left:1513.60px;top:986.00px;font-size:12px;line-height:16px;color:#000;letter-spacing:-0.316px;">Gross Margin on 2482.90 ha:</div>
<div class="t" style="left:1730.20px;top:986.00px;font-size:12px;line-height:16px;color:#000;letter-spacing:-0.480px;">$366.76 /ha</div>
<div class="t" style="left:1853.20px;top:986.00px;font-size:12px;line-height:16px;color:#000;letter-spacing:-0.713px;">$910,638.83</div>
<div class="t" style="left:1535.50px;top:1006.00px;font-size:12px;line-height:16px;color:#0000ff;letter-spacing:-0.186px;">Projected Gross Margin:</div>
<div class="t" style="left:1730.20px;top:1006.00px;font-size:12px;line-height:16px;color:#0000ff;letter-spacing:-0.480px;">$792.99 /ha</div>
<div class="t" style="left:1844.20px;top:1006.00px;font-size:12px;line-height:16px;color:#0000ff;letter-spacing:-0.662px;">$1,968,919.47</div>
<div style="left:0px;top:1030px;width:1920px;height:1px;background:#d9d9d9;"></div>
<div style="left:499px;top:1032px;width:1px;height:18px;background:#d4d4d4;"></div>
<div style="left:709px;top:1032px;width:1px;height:18px;background:#d4d4d4;"></div>
<div style="left:909px;top:1032px;width:1px;height:18px;background:#d4d4d4;"></div>
<div class="t" style="left:543.20px;top:1033.00px;font-size:12px;line-height:16px;color:#000;letter-spacing:-0.195px;">C:\PxData\Example Data</div>
<div class="t" style="left:753.90px;top:1033.00px;font-size:12px;line-height:16px;color:#000;letter-spacing:-0.273px;">29/09/2020</div>
<div class="t" style="left:818.50px;top:1033.00px;font-size:12px;line-height:16px;color:#000;letter-spacing:-0.187px;">11:46 AM</div>
</body></html>
